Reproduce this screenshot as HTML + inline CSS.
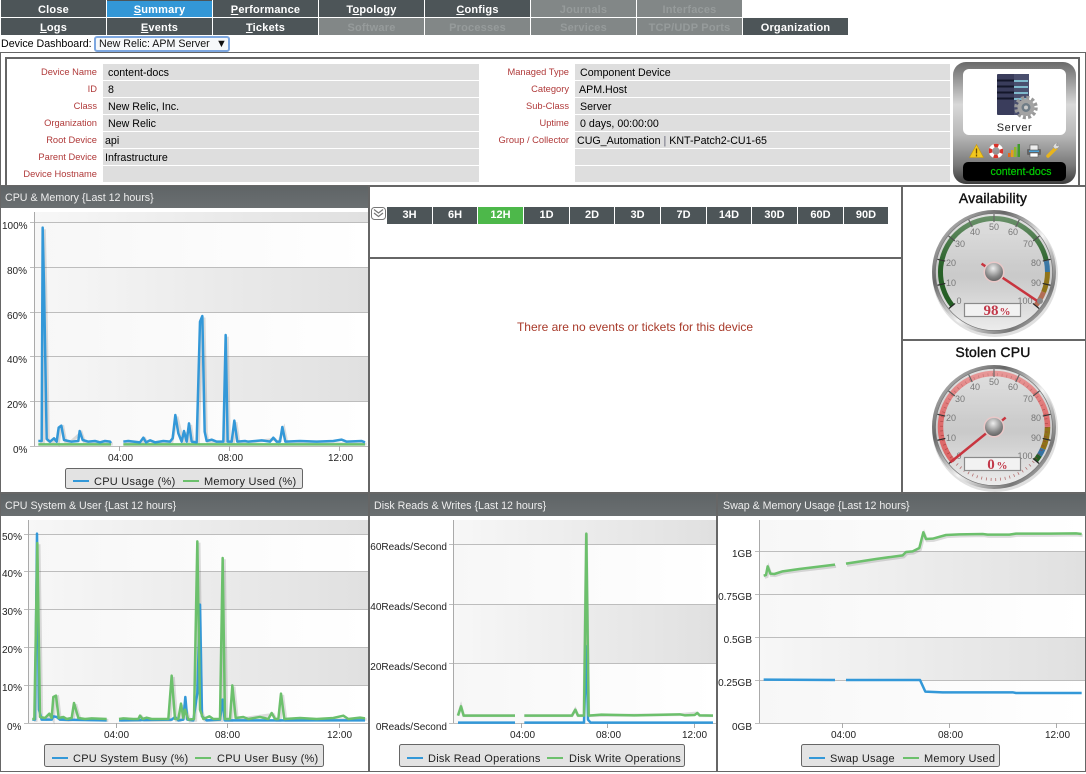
<!DOCTYPE html>
<html><head><meta charset="utf-8"><title>Device Dashboard</title>
<style>
html,body{margin:0;padding:0;background:#fff;width:1086px;height:774px;overflow:hidden;font-family:"Liberation Sans",Arial,sans-serif}
.a{position:absolute}
.n{position:absolute;height:17px;line-height:20px;width:105px;text-align:center;background:#4d5558;color:#fff;font-weight:bold;font-size:11px;letter-spacing:.2px;overflow:hidden}
.n.d{background:#828787;color:#969b9b}
.n.s{background:#3397d6;border-top:1px solid #4d5558;height:16px;line-height:18px}
.l{position:absolute;width:140px;text-align:right;color:#b03a3a;font-size:9.33px;line-height:16px;height:16px}
.v{position:absolute;height:16px;line-height:18px;background:#dedede;font-size:10.67px;color:#000;overflow:hidden}
.b{position:absolute;top:207px;height:17px;line-height:17px;background:#4d5558;color:#fff;font-weight:bold;font-size:11px;text-align:center}
svg text{font-family:"Liberation Sans",Arial,sans-serif}
.ax{font-size:10px;fill:#222}
.lg{font-size:11px;fill:#222;letter-spacing:.25px}
.t{font-size:10.67px;fill:#eee}
.c{fill:none;stroke-width:7.5;stroke-linejoin:round;stroke-linecap:butt}
.sh{fill:none;stroke:#000;stroke-opacity:.13;stroke-width:9}
.bl{stroke:#3398d8}.gr{stroke:#6cc06c}
.gl{font-size:9px;fill:#777;text-anchor:middle}
</style></head><body>
<div class="n" style="left:1px;top:0">Close</div>
<div class="n s" style="left:107px;top:0"><u>S</u>ummary</div>
<div class="n" style="left:213px;top:0"><u>P</u>erformance</div>
<div class="n" style="left:319px;top:0">T<u>o</u>pology</div>
<div class="n" style="left:425px;top:0"><u>C</u>onfigs</div>
<div class="n d" style="left:531px;top:0">Journals</div>
<div class="n d" style="left:637px;top:0">Interfaces</div>
<div class="n" style="left:1px;top:18px"><u>L</u>ogs</div>
<div class="n" style="left:107px;top:18px"><u>E</u>vents</div>
<div class="n" style="left:213px;top:18px"><u>T</u>ickets</div>
<div class="n d" style="left:319px;top:18px">Software</div>
<div class="n d" style="left:425px;top:18px">Processes</div>
<div class="n d" style="left:531px;top:18px">Services</div>
<div class="n d" style="left:637px;top:18px">TCP/UDP Ports</div>
<div class="n" style="left:743px;top:18px">Organization</div>

<div class="a" style="left:1px;top:37px;font-size:10.67px;line-height:15px">Device Dashboard:</div>
<div class="a" style="left:94px;top:36px;width:129px;height:12px;border:2px solid #7da7e0;border-radius:3px;background:#f6f8fa;font-size:10.67px;line-height:13px;padding-left:3px;color:#111">New Relic: APM Server<span class="a" style="left:120px;top:0;font-size:11px">▼</span></div>

<div class="a" style="left:0;top:52px;width:1084px;height:200px;border:1px solid #666;border-bottom:0"></div>
<div class="a" style="left:5px;top:57px;width:1071px;height:126px;border:2px solid #666;background:#fff"></div>

<div class="l" style="left:-43px;top:64px">Device Name</div>
<div class="l" style="left:-43px;top:81px">ID</div>
<div class="l" style="left:-43px;top:98px">Class</div>
<div class="l" style="left:-43px;top:115px">Organization</div>
<div class="l" style="left:-43px;top:132px">Root Device</div>
<div class="l" style="left:-43px;top:149px">Parent Device</div>
<div class="l" style="left:-43px;top:166px">Device Hostname</div>
<div class="v" style="left:103px;top:64px;width:371px;padding-left:5px">content-docs</div>
<div class="v" style="left:103px;top:81px;width:371px;padding-left:5px">8</div>
<div class="v" style="left:103px;top:98px;width:371px;padding-left:5px">New Relic, Inc.</div>
<div class="v" style="left:103px;top:115px;width:371px;padding-left:5px">New Relic</div>
<div class="v" style="left:103px;top:132px;width:374px;padding-left:2px">api</div>
<div class="v" style="left:103px;top:149px;width:374px;padding-left:2px">Infrastructure</div>
<div class="v" style="left:103px;top:166px;width:376px"></div>

<div class="l" style="left:429px;top:64px">Managed Type</div>
<div class="l" style="left:429px;top:81px">Category</div>
<div class="l" style="left:429px;top:98px">Sub-Class</div>
<div class="l" style="left:429px;top:115px">Uptime</div>
<div class="l" style="left:429px;top:132px">Group / Collector</div>
<div class="v" style="left:575px;top:64px;width:370px;padding-left:5px">Component Device</div>
<div class="v" style="left:575px;top:81px;width:371px;padding-left:4px">APM.Host</div>
<div class="v" style="left:575px;top:98px;width:370px;padding-left:5px">Server</div>
<div class="v" style="left:575px;top:115px;width:370px;padding-left:5px">0 days, 00:00:00</div>
<div class="v" style="left:575px;top:132px;width:373px;padding-left:2px">CUG_Automation <span style="color:#667">|</span> KNT-Patch2-CU1-65</div>
<div class="v" style="left:575px;top:149px;width:375px"></div>
<div class="v" style="left:575px;top:166px;width:375px"></div>

<div class="b" style="left:387px;width:45px">3H</div>
<div class="b" style="left:433px;width:44px">6H</div>
<div class="b" style="left:478px;width:45px;background:#4db84a">12H</div>
<div class="b" style="left:524px;width:45px">1D</div>
<div class="b" style="left:570px;width:44px">2D</div>
<div class="b" style="left:615px;width:45px">3D</div>
<div class="b" style="left:661px;width:45px">7D</div>
<div class="b" style="left:707px;width:44px">14D</div>
<div class="b" style="left:752px;width:45px">30D</div>
<div class="b" style="left:798px;width:45px">60D</div>
<div class="b" style="left:844px;width:44px">90D</div>
<div class="a" style="left:369px;top:320px;width:532px;text-align:center;font-size:12px;line-height:14px;color:#a83a2a">There are no events or tickets for this device</div>

<svg class="a" style="left:0;top:0" width="1086" height="774" viewBox="0 0 1086 774">
<defs>
<linearGradient id="gb"><stop offset="0" stop-color="#f7f7f7"/><stop offset="1" stop-color="#e0e0e0"/></linearGradient>
<linearGradient id="wb"><stop offset="0" stop-color="#f7f7f7"/><stop offset="1" stop-color="#fff"/></linearGradient>
<linearGradient id="hd" x2="0" y2="1"><stop offset="0" stop-color="#5f6466"/><stop offset="1" stop-color="#6a6f71"/></linearGradient>
<linearGradient id="ch" x2="0" y2="1"><stop offset="0" stop-color="#6a6a6a"/><stop offset=".35" stop-color="#d8d8d8"/><stop offset=".6" stop-color="#b8b8b8"/><stop offset=".85" stop-color="#777"/><stop offset="1" stop-color="#3c3c3c"/></linearGradient>
<linearGradient id="rim" x1="0" y1="0" x2="1" y2="1"><stop offset="0" stop-color="#ddd"/><stop offset=".3" stop-color="#666"/><stop offset=".55" stop-color="#f4f4f4"/><stop offset=".8" stop-color="#777"/><stop offset="1" stop-color="#eee"/></linearGradient>
<linearGradient id="face" x2="0" y2="1"><stop offset="0" stop-color="#d0d0d0"/><stop offset=".55" stop-color="#c8c8c8"/><stop offset="1" stop-color="#ececec"/></linearGradient>
<linearGradient id="gloss" x2="0" y2="1"><stop offset="0" stop-color="#fff" stop-opacity=".35"/><stop offset=".45" stop-color="#fff" stop-opacity=".05"/><stop offset="1" stop-color="#fff" stop-opacity="0"/></linearGradient>
<radialGradient id="hub" cx=".45" cy=".3" r=".8"><stop offset="0" stop-color="#eee"/><stop offset=".6" stop-color="#888"/><stop offset="1" stop-color="#555"/></radialGradient>
<g id="rimg">
<circle r="63" cx="1" cy="2" fill="#000" opacity=".12"/>
<circle r="62" fill="url(#rim)"/>
<circle r="58.500" fill="url(#face)" stroke="#777" stroke-width=".7"/>
</g>
<g id="tk" stroke="#222" stroke-width="1.200">
<g id="mj"><line y1="-58" y2="-50" transform="rotate(-129)"/><line y1="-58" y2="-50" transform="rotate(-103.200)"/><line y1="-58" y2="-50" transform="rotate(-77.400)"/><line y1="-58" y2="-50" transform="rotate(-51.600)"/><line y1="-58" y2="-50" transform="rotate(-25.800)"/><line y1="-58" y2="-50"/><line y1="-58" y2="-50" transform="rotate(25.800)"/><line y1="-58" y2="-50" transform="rotate(51.600)"/><line y1="-58" y2="-50" transform="rotate(77.400)"/><line y1="-58" y2="-50" transform="rotate(103.200)"/><line y1="-58" y2="-50" transform="rotate(129)"/></g>
</g>
</defs>

<!-- panel borders -->
<rect x="0" y="185" width="1086" height="2" fill="#666"/>
<rect x="368" y="186" width="2" height="307" fill="#666"/>
<rect x="901" y="186" width="2" height="307" fill="#666"/>
<rect x="0" y="186" width="1" height="585" fill="#666"/>
<rect x="1085" y="186" width="1" height="585" fill="#666"/>
<rect x="370" y="257" width="531" height="2" fill="#666"/>
<rect x="903" y="339" width="183" height="2" fill="#666"/>
<rect x="0" y="492" width="1086" height="2" fill="#666"/>
<rect x="368" y="494" width="2" height="277" fill="#666"/>
<rect x="716" y="494" width="2" height="277" fill="#666"/>
<rect x="0" y="771" width="1086" height="1" fill="#666"/>

<!-- headers -->
<rect x="1" y="186" width="367" height="22" fill="url(#hd)"/>
<rect x="1" y="494" width="367" height="22" fill="url(#hd)"/>
<rect x="370" y="494" width="346" height="22" fill="url(#hd)"/>
<rect x="718" y="494" width="368" height="22" fill="url(#hd)"/>
<text class="t" x="5" y="201">CPU &amp; Memory {Last 12 hours}</text>
<text class="t" x="5" y="509">CPU System &amp; User {Last 12 hours}</text>
<text class="t" x="374" y="509">Disk Reads &amp; Writes {Last 12 hours}</text>
<text class="t" x="723" y="509">Swap &amp; Memory Usage {Last 12 hours}</text>

<!-- chevron -->
<rect x="371.500" y="207.500" width="14" height="12" rx="3" fill="#fff" stroke="#777"/>
<path d="M374 209.500l4.500 3.500 4.500-3.500M374 213l4.500 3.500 4.500-3.500" fill="none" stroke="#777" stroke-width="1.200"/>

<!-- Device box -->
<rect x="953" y="62" width="123" height="122" rx="13" fill="url(#ch)"/>
<rect x="963" y="69" width="103" height="66" rx="6" fill="#fff"/>
<rect x="997" y="74" width="32" height="41" rx="1" fill="#3a3d5c"/>
<rect x="1014" y="74" width="15" height="41" fill="#4a4f6e"/>
<path d="M997 80.500h17M997 86.500h17M997 92.500h17M997 98.500h17" stroke="#14172a" stroke-width="2"/>
<path d="M1014 81h14M1014 87h14M1014 93h14M1014 99h14" stroke="#7fb9cc" stroke-width="2"/>
<circle cx="1026" cy="107.500" r="10" fill="none" stroke="#999" stroke-width="3.500" stroke-dasharray="3 2.240"/>
<circle cx="1026" cy="107.500" r="8.500" fill="#a3a3a3"/>
<circle cx="1026" cy="107.500" r="4.500" fill="#6f7c86"/>
<circle cx="1026" cy="107.500" r="2" fill="#c9c9c9"/>
<text x="1014.500" y="131" font-size="11" text-anchor="middle" fill="#222" letter-spacing=".5">Server</text>
<path d="M976.500 144.500l7 13h-14z" fill="#f2c81e" stroke="#c79a10" stroke-width=".6"/>
<path d="M976.500 148.500v5M976.500 154.500v2" stroke="#6b4a00" stroke-width="1.300"/>
<circle cx="996" cy="151" r="5.500" fill="none" stroke="#fff" stroke-width="3.500"/>
<circle cx="996" cy="151" r="5.500" fill="none" stroke="#d8332a" stroke-width="3.500" stroke-dasharray="4.300 4.300" stroke-dashoffset="2"/>
<path d="M1008 153h2.500v4H1008z" fill="#e2681c"/><path d="M1011 150h2.500v7H1011z" fill="#e4a01c"/><path d="M1014 147h2.500v10H1014z" fill="#8cb92a"/><path d="M1017.500 144h2.500v13h-2.500z" fill="#3f9a2c"/>
<rect x="1027" y="149" width="14" height="6" rx="1" fill="#666"/><rect x="1030" y="145" width="8" height="5" fill="#eee" stroke="#555" stroke-width=".6"/><rect x="1030" y="153" width="8" height="4" fill="#fff" stroke="#555" stroke-width=".6"/><rect x="1029" y="150.500" width="10" height="1.500" fill="#4ba3d8"/>
<path d="M1048 156l8-8" stroke="#e8b41c" stroke-width="3.500" stroke-linecap="round"/>
<path d="M1055 149l3-1 2-3-3 1-1-1 2-2-3 .5-2 3z" fill="#ddd" stroke="#888" stroke-width=".4"/>
<rect x="963" y="162" width="103" height="19" rx="5" fill="#000"/>
<text x="1021" y="175" font-size="10.670" text-anchor="middle" fill="#0c0" stroke="#0c0" stroke-width=".2">content-docs</text>

<!-- Chart 1 -->
<rect x="35" y="212" width="333" height="10" fill="url(#gb)"/>
<rect x="35" y="222" width="333" height="45" fill="url(#wb)"/>
<rect x="35" y="267" width="333" height="45" fill="url(#gb)"/>
<rect x="35" y="312" width="333" height="44" fill="url(#wb)"/>
<rect x="35" y="356" width="333" height="45" fill="url(#gb)"/>
<rect x="35" y="401" width="333" height="45" fill="url(#wb)"/>
<path d="M30 222.500H368M30 267.500H368M30 312.500H368M30 356.500H368M30 401.500H368M30 446.500H368" stroke="#bdbdbd"/>
<path d="M34.500 212V446M119.500 446v5M229.500 446v5M339.500 446v5" stroke="#aaa"/>
<g class="ax"><text x="2" y="229">100%</text><text x="7" y="274">80%</text><text x="7" y="319">60%</text><text x="7" y="363">40%</text><text x="7" y="408">20%</text><text x="13" y="453">0%</text>
<text x="108" y="461">04:00</text><text x="218" y="461">08:00</text><text x="328" y="461">12:00</text></g>
<g transform="translate(0,185) scale(.33333)">
<polyline class="sh" transform="translate(5,5)" points="115,768 125,768 128,128 132,300 140,762 150,770 162,760 170,770 176,728 184,722 192,765 205,768 239,738 248,765 333,772"/>
<polyline class="sh" transform="translate(5,5)" points="370,770 420,772 430,758 438,772 510,770 526,690 545,770 552,738 560,770 567,715 575,770 590,772 600,410 607,393 614,740 620,768 670,770 677,450 683,770 695,770 703,707 712,770 820,758 830,770 847,726 856,770 1095,772"/>
<polyline class="c gr" points="115,778 333,778"/><polyline class="c gr" points="370,778 1095,778"/>
<polyline class="c bl" points="115,768 125,768 128,128 132,300 140,762 150,770 162,760 170,770 176,728 184,722 192,765 205,768 215,770 235,768 239,738 248,765 265,770 285,768 300,772 315,768 330,770 333,774"/>
<polyline class="c bl" points="370,770 385,768 420,772 430,758 438,772 450,766 465,772 490,768 510,770 518,760 526,690 535,745 545,770 552,738 560,770 567,715 575,770 590,772 600,410 607,393 614,740 620,768 635,764 650,770 670,770 677,450 683,770 695,770 703,707 712,770 735,768 745,770 785,766 810,770 820,758 830,770 840,770 847,726 856,770 900,768 950,770 1000,768 1025,764 1040,770 1085,768 1095,772"/>
</g>
<rect x="65.500" y="468.500" width="237" height="20" rx="2" fill="#e3e3e3" stroke="#666"/>
<path d="M73 481h16" stroke="#3398d8" stroke-width="2"/><path d="M183 481h16" stroke="#6cc06c" stroke-width="2"/>
<text class="lg" x="94" y="485">CPU Usage (%)</text><text class="lg" x="204" y="485">Memory Used (%)</text>

<!-- Chart 2 -->
<rect x="29" y="520" width="339" height="14" fill="url(#gb)"/>
<rect x="29" y="534" width="339" height="37" fill="url(#wb)"/>
<rect x="29" y="571" width="339" height="38" fill="url(#gb)"/>
<rect x="29" y="609" width="339" height="38" fill="url(#wb)"/>
<rect x="29" y="647" width="339" height="38" fill="url(#gb)"/>
<rect x="29" y="685" width="339" height="38" fill="url(#wb)"/>
<path d="M24 534.500H368M24 571.500H368M24 609.500H368M24 647.500H368M24 685.500H368M24 723.500H368" stroke="#bdbdbd"/>
<path d="M28.500 520V723M116.500 723v5M227.500 723v5M339.500 723v5" stroke="#aaa"/>
<g class="ax"><text x="2" y="540">50%</text><text x="2" y="577">40%</text><text x="2" y="615">30%</text><text x="2" y="653">20%</text><text x="2" y="691">10%</text><text x="7" y="730">0%</text>
<text x="104" y="738">04:00</text><text x="215" y="738">08:00</text><text x="327" y="738">12:00</text></g>
<g transform="translate(0,493) scale(.33333)">
<polyline class="sh" transform="translate(5,4)" points="97,678 103,678 112,150 120,672 135,675 148,662 155,675 160,612 168,608 176,675 200,678 215,675 222,630 235,675 320,678"/>
<polyline class="sh" transform="translate(5,4)" points="357,678 415,678 420,668 428,678 505,678 515,548 525,678 535,678 543,632 550,675 555,650 565,680 582,678 592,145 600,650 610,678 660,678 668,195 675,678 690,678 697,577 707,675 815,660 825,678 835,678 843,602 853,678 1095,675"/>
<polyline class="c bl" points="97,680 105,680 111,122 117,650 125,680 155,680 160,670 170,672 180,680 320,682"/>
<polyline class="c bl" points="357,682 515,680 525,672 535,682 550,680 556,612 562,680 580,682 592,600 600,335 606,670 620,682 660,680 668,620 674,682 1095,682"/>
<polyline class="c gr" points="97,678 103,678 112,150 120,672 135,675 148,662 155,675 160,612 168,608 176,675 190,672 200,678 215,675 222,630 235,675 255,678 275,676 320,678"/>
<polyline class="c gr" points="357,678 370,676 400,678 415,678 420,668 428,678 440,674 455,678 505,678 515,548 525,678 535,678 543,632 550,675 555,650 565,680 582,678 592,145 600,650 610,678 628,670 640,678 660,678 668,195 675,678 690,678 697,577 707,675 730,672 745,678 780,672 805,678 815,660 825,678 835,678 843,602 853,678 900,675 950,678 1000,675 1030,668 1045,678 1080,674 1095,676"/>
</g>
<rect x="44.500" y="744.500" width="279" height="22" rx="2" fill="#e3e3e3" stroke="#666"/>
<path d="M52 758h16" stroke="#3398d8" stroke-width="2"/><path d="M195 758h16" stroke="#6cc06c" stroke-width="2"/>
<text class="lg" x="73" y="762">CPU System Busy (%)</text><text class="lg" x="217" y="762">CPU User Busy (%)</text>

<!-- Chart 3 -->
<rect x="454" y="520" width="262" height="24" fill="url(#gb)"/>
<rect x="454" y="544" width="262" height="60" fill="url(#wb)"/>
<rect x="454" y="604" width="262" height="59" fill="url(#gb)"/>
<rect x="454" y="663" width="262" height="60" fill="url(#wb)"/>
<path d="M449 544.500H716M449 604.500H716M449 663.500H716M449 723.500H716" stroke="#bdbdbd"/>
<path d="M453.500 520V723M521.500 723v5M607.500 723v5M694.500 723v5" stroke="#aaa"/>
<g class="ax" text-anchor="end"><text x="447" y="550">60Reads/Second</text><text x="447" y="610">40Reads/Second</text><text x="447" y="670">20Reads/Second</text><text x="447" y="730">0Reads/Second</text></g>
<g class="ax"><text x="510" y="738">04:00</text><text x="596" y="738">08:00</text><text x="682" y="738">12:00</text></g>
<g transform="translate(368,493) scale(.33333)">
<polyline class="sh" points="270,668 279,640 287,668 441,668"/>
<polyline class="sh" points="469,668 612,668 622,650 630,668 648,668 655,122 662,668 935,665 988,660 995,668 1035,668"/>
<polyline class="c bl" points="270,689 441,689"/>
<polyline class="c bl" points="469,689 648,689 655,460 660,680 668,689 1035,689"/>
<polyline class="c gr" points="270,668 279,640 287,668 441,668"/>
<polyline class="c gr" points="469,668 612,668 622,650 630,668 648,668 655,122 662,668 700,665 800,667 935,664 950,667 980,666 988,660 995,667 1035,668"/>
</g>
<rect x="399.500" y="744.500" width="285" height="22" rx="2" fill="#e3e3e3" stroke="#666"/>
<path d="M407 758h16" stroke="#3398d8" stroke-width="2"/><path d="M547 758h16" stroke="#6cc06c" stroke-width="2"/>
<text class="lg" x="428" y="762">Disk Read Operations</text><text class="lg" x="569" y="762">Disk Write Operations</text>

<!-- Chart 4 -->
<rect x="760" y="520" width="325" height="31" fill="url(#wb)"/>
<rect x="760" y="551" width="325" height="43" fill="url(#gb)"/>
<rect x="760" y="594" width="325" height="43" fill="url(#wb)"/>
<rect x="760" y="637" width="325" height="43" fill="url(#gb)"/>
<rect x="760" y="680" width="325" height="43" fill="url(#wb)"/>
<path d="M755 551.500H1085M755 594.500H1085M755 637.500H1085M755 680.500H1085M755 723.500H1085" stroke="#bdbdbd"/>
<path d="M759.500 520V723M842.500 723v5M949.500 723v5M1056.500 723v5" stroke="#aaa"/>
<g class="ax" text-anchor="end"><text x="752" y="557">1GB</text><text x="752" y="600">0.75GB</text><text x="752" y="643">0.5GB</text><text x="752" y="686">0.25GB</text><text x="752" y="730">0GB</text></g>
<g class="ax"><text x="831" y="738">04:00</text><text x="938" y="738">08:00</text><text x="1045" y="738">12:00</text></g>
<g transform="translate(716,493) scale(.33333)">
<polyline class="sh" transform="translate(3,5)" points="143,248 150,246 155,220 163,242 175,243 200,235 250,228 357,215"/>
<polyline class="sh" transform="translate(3,5)" points="390,212 480,198 560,187 570,177 590,175 610,165 622,118 630,138 650,137 690,126 730,124 800,123 815,125 880,125 900,122 1000,122 1080,121 1097,123"/>
<polyline class="c bl" points="143,560 357,561"/><polyline class="c bl" points="390,561 612,561 628,596 680,598 890,598 900,600 1097,600"/>
<polyline class="c gr" points="143,248 150,246 155,220 163,242 175,243 200,235 250,228 357,215"/>
<polyline class="c gr" points="390,212 480,198 560,187 570,177 590,175 610,165 622,118 630,138 650,137 690,126 730,124 800,123 815,125 880,125 900,122 1000,122 1080,121 1097,123"/>
</g>
<rect x="801.500" y="744.500" width="198" height="22" rx="2" fill="#e3e3e3" stroke="#666"/>
<path d="M809 758h16" stroke="#3398d8" stroke-width="2"/><path d="M903 758h16" stroke="#6cc06c" stroke-width="2"/>
<text class="lg" x="830" y="762">Swap Usage</text><text class="lg" x="924" y="762">Memory Used</text>

<!-- Gauge 1 -->
<text x="993" y="203" font-size="14" text-anchor="middle" fill="#111" stroke="#111" stroke-width=".4" letter-spacing=".2">Availability</text>
<g transform="translate(994,272)">
<use href="#rimg"/>
<g fill="none" stroke-width="5">
<circle r="53.500" pathLength="360" stroke="#1f5a1f" stroke-dasharray="207 360" transform="rotate(-219)"/>
<circle r="53.500" pathLength="360" stroke="#2f6f9f" stroke-dasharray="12 360" transform="rotate(-12)"/>
<circle r="53.500" pathLength="360" stroke="#8a6e10" stroke-dasharray="22 360" transform="rotate(0)"/>
<circle r="53.500" pathLength="360" stroke="#b06a50" stroke-dasharray="17 360" transform="rotate(22)"/>
</g>
<use href="#tk"/>
<circle r="58" fill="url(#gloss)"/>
<text class="gl" x="-35" y="32">0</text><text class="gl" x="-43" y="14">10</text><text class="gl" x="-43" y="-6">20</text><text class="gl" x="-34" y="-25">30</text><text class="gl" x="-19" y="-37">40</text><text class="gl" y="-42">50</text><text class="gl" x="19" y="-37">60</text><text class="gl" x="34" y="-25">70</text><text class="gl" x="42" y="-6">80</text><text class="gl" x="42" y="14">90</text><text class="gl" x="31" y="32">100</text>
<rect x="-29.500" y="31.500" width="56" height="13" fill="#f2f2f2" stroke="#8a8a8a" stroke-width="1.200"/>
<text x="-3" y="43" font-size="15" font-weight="bold" text-anchor="middle" fill="#c2394a" style="font-family:'Liberation Serif',serif">98</text>
<text x="11" y="43" font-size="11" font-weight="bold" text-anchor="middle" fill="#c2394a" style="font-family:'Liberation Serif',serif">%</text>
<line y1="15" y2="-56" stroke="#c8353f" stroke-width="2.500" transform="rotate(123.800)"/>
<circle cx="46" cy="29" r="3" fill="#888"/>
<circle r="10.500" fill="#e9c8c8"/><circle r="9" fill="url(#hub)"/>
</g>

<!-- Gauge 2 -->
<text x="993" y="357" font-size="14" text-anchor="middle" fill="#111" stroke="#111" stroke-width=".4" letter-spacing=".2">Stolen CPU</text>
<g transform="translate(994,427)">
<use href="#rimg"/>
<g fill="none" stroke-width="5.500">
<circle r="53.500" pathLength="360" stroke="#dc6464" stroke-dasharray="219 360" transform="rotate(-219)"/>
<circle r="53.500" pathLength="360" stroke="#8a6e10" stroke-dasharray="24 360" transform="rotate(0)"/>
<circle r="53.500" pathLength="360" stroke="#2f6f9f" stroke-dasharray="8 360" transform="rotate(24)"/>
<circle r="53.500" pathLength="360" stroke="#1f5a1f" stroke-dasharray="7 360" transform="rotate(32)"/>
<circle r="52.500" pathLength="360" stroke="#9a3030" stroke-width="3" stroke-dasharray=".8 4.360" stroke-opacity=".7"/>
</g>
<use href="#tk"/>
<circle r="58" fill="url(#gloss)"/>
<text class="gl" x="-35" y="32">0</text><text class="gl" x="-43" y="14">10</text><text class="gl" x="-43" y="-6">20</text><text class="gl" x="-34" y="-25">30</text><text class="gl" x="-19" y="-37">40</text><text class="gl" y="-42">50</text><text class="gl" x="19" y="-37">60</text><text class="gl" x="34" y="-25">70</text><text class="gl" x="42" y="-6">80</text><text class="gl" x="42" y="14">90</text><text class="gl" x="31" y="32">100</text>
<rect x="-29.500" y="30.500" width="56" height="13" fill="#f2f2f2" stroke="#8a8a8a" stroke-width="1.200"/>
<text x="-3" y="42" font-size="15" font-weight="bold" text-anchor="middle" fill="#c2394a" style="font-family:'Liberation Serif',serif">0</text>
<text x="8" y="42" font-size="11" font-weight="bold" text-anchor="middle" fill="#c2394a" style="font-family:'Liberation Serif',serif">%</text>
<line y1="15" y2="-56" stroke="#c8353f" stroke-width="2.500" transform="rotate(-129)"/>
<circle r="10.500" fill="#e9c8c8"/><circle r="9" fill="url(#hub)"/>
</g>
</svg>
</body></html>
